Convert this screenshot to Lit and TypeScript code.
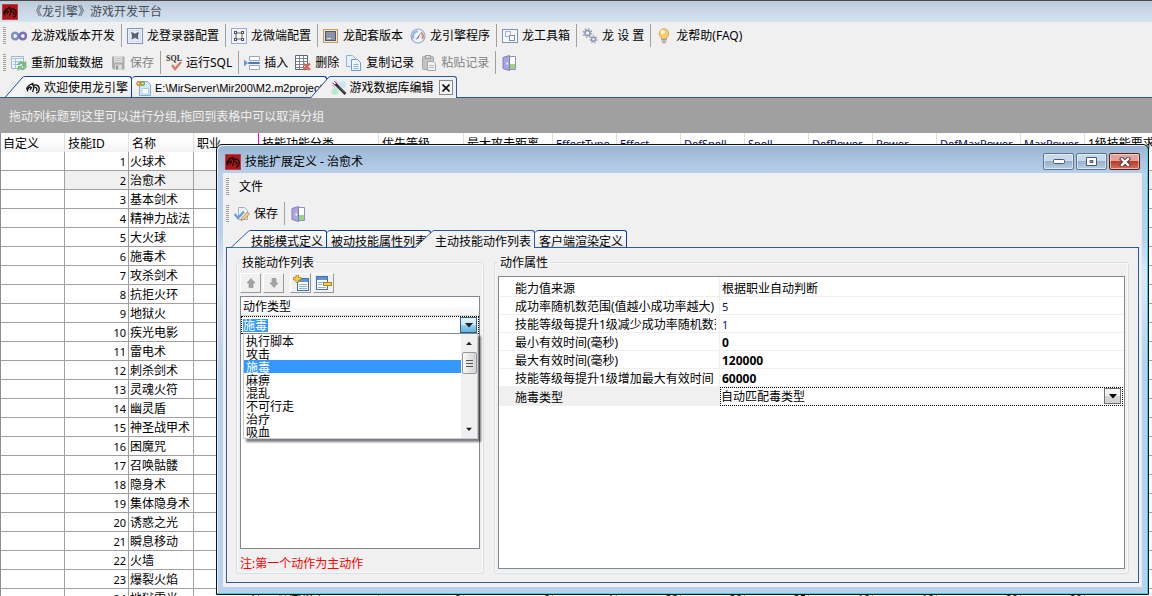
import { LitElement, html, svg, css, nothing, TemplateResult } from "lit";
import { customElement, property } from "lit/decorators.js";

const glyph = (body: TemplateResult) =>
  html`<svg width="16" height="16" viewBox="0 0 16 16" aria-hidden="true">${body}</svg>`;

const dragon = svg`
  <path d="M1.500 9.500C2 7 4 5 6.500 4M2.500 11.500C2 8.500 5 6 6.500 7.500L5 10M6.500 4L8.500 3M6.500 4C9 4.500 9.500 8 7.500 12M8.500 6C10.500 3.800 14.500 5.500 14.200 9C14 11.500 12.500 13 11 13M9.500 7.500C11.500 7 12.500 9 11.500 11" fill="none" stroke-width="1.300"/>`;

const icons: Record<string, TemplateResult> = {
  logo: glyph(svg`<rect width="16" height="16" rx="1.500" fill="#a8191c"/><rect x=".5" y=".5" width="15" height="15" rx="1" fill="none" stroke="#c8393a"/><g stroke="#200808">${dragon}</g>`),
  dragon: glyph(svg`<g stroke="#111">${dragon}</g>`),
  infinity: glyph(svg`<path d="M8 8C6.500 5.300 5.500 4.800 4.200 4.800A3.200 3.200 0 0 0 4.200 11.200C5.600 11.200 6.600 10.500 8 8Z" fill="none" stroke="#7d93c6" stroke-width="2.600"/><path d="M8 8C9.500 5.200 10.500 4.800 11.800 4.800A3.200 3.200 0 0 1 11.800 11.200C10.400 11.200 9.400 10.500 8 8Z" fill="none" stroke="#7a72b4" stroke-width="2.600"/>`),
  login: glyph(svg`<rect x=".5" y=".5" width="15" height="15" fill="#eef2fa" stroke="#7f93c0"/><rect x="2.500" y="2.500" width="11" height="11" fill="#e6ebf5" stroke="#b9c4dc" stroke-dasharray="1 1"/><path d="M4 4L7 5L8 6L9 5L12 4L11 8L11.500 11.500L9 10.500L8 9.500L7 10.500L4.500 11.500L5 8Z" fill="#56627a"/>`),
  micro: glyph(svg`<rect x=".5" y=".5" width="15" height="15" fill="#f2f4fa" stroke="#9aabd0"/><rect x="5" y="5" width="6" height="6" fill="none" stroke="#666"/><g fill="#fff" stroke="#555"><rect x="3.500" y="3.500" width="2" height="2"/><rect x="10.500" y="3.500" width="2" height="2"/><rect x="3.500" y="10.500" width="2" height="2"/><rect x="10.500" y="10.500" width="2" height="2"/></g>`),
  monitor: glyph(svg`<rect x=".5" y="1.500" width="14" height="13" fill="#f9e6c8" stroke="#c8995a"/><rect x="2.500" y="3.500" width="10" height="9" fill="#8a95ab" stroke="#4d5973"/><path d="M4 10.500H8" stroke="#dfe6f5"/>`),
  gauge: glyph(svg`<circle cx="8" cy="8" r="7" fill="#eef4fc" stroke="#9aa8c6" stroke-width="1.200"/><path d="M3.500 10.500A5 5 0 0 1 8 3.200" fill="none" stroke="#86b4e4" stroke-width="2"/><path d="M11 4.500A5 5 0 0 1 12.200 10.800" fill="none" stroke="#dd8470" stroke-width="2"/><path d="M5.500 12L11 4.500L8.500 10Z" fill="#5d6884"/>`),
  toolbox: glyph(svg`<rect x=".5" y="1.500" width="15" height="13" fill="#f7f9fd" stroke="#7b90c4"/><rect x="3.500" y="3.500" width="5" height="5" fill="none" stroke="#9fb2da"/><rect x="7.500" y="7.500" width="5" height="5" fill="#fff" stroke="#7f90b4"/>`),
  gears: glyph(svg`<circle cx="5.500" cy="5" r="2.600" fill="none" stroke="#8794b0" stroke-width="1.500"/><circle cx="5.500" cy="5" r="4.200" fill="none" stroke="#94a1bb" stroke-width="1.500" stroke-dasharray="1.600 1.700"/><circle cx="11.500" cy="11.300" r="2" fill="none" stroke="#8794b0" stroke-width="1.400"/><circle cx="11.500" cy="11.300" r="3.400" fill="none" stroke="#94a1bb" stroke-width="1.300" stroke-dasharray="1.500 1.500"/>`),
  bulb: glyph(svg`<path d="M8 .7A4.900 4.900 0 0 1 10.800 9.500V11H5.200V9.500A4.900 4.900 0 0 1 8 .7Z" fill="#fbcb72" stroke="#e0a552"/><ellipse cx="6.700" cy="4" rx="2.200" ry="2.300" fill="#fff1c8"/><path d="M5.500 11.700H10.500M5.500 13.200H10.500M6.500 14.800H9.500" stroke="#8d93a0"/>`),
  reload: glyph(svg`<path d="M.5 1.500H12.500V13.500H.5Z" fill="#eef5fb" stroke="#9fb8d4"/><path d="M.5 3.500H12.500M2 6.500H11M2 9.500H7M4.500 3.500V13" stroke="#a9c3de"/><path d="M6.500 9.500C8 6.500 11.500 6 13 8L14.800 6.500V10.500H10.800L12 9.200C10.500 8 9 8.500 8.500 10Z" fill="#7cc480" stroke="#4b9e59" stroke-width=".6"/><path d="M15.500 11.500C14 15 10.500 15.500 8.800 13.700L7 15.300V11.500H11L9.800 12.700C11.500 13.800 13 13 13.500 11.500Z" fill="#8fd090" stroke="#4b9e59" stroke-width=".6"/>`),
  saveGrey: glyph(svg`<path d="M2 1.500H14.500V14.500H3.500L2 13Z" fill="#ababab"/><rect x="4" y="1.500" width="8.500" height="6" fill="#dedede"/><path d="M5 3.500H11.500M5 5.500H11.500" stroke="#c2c2c2"/><rect x="5" y="9.500" width="7" height="5" fill="#dadada"/><rect x="6" y="10.500" width="2" height="4" fill="#989898"/>`),
  sql: html`<svg width="16" height="16" viewBox="0 0 16 16" aria-hidden="true" overflow="visible"><text x="0" y="6" font-family="Liberation Serif, serif" font-size="8" font-weight="700" fill="#333">SQL</text><path d="M6 10L9 14L15 7" fill="none" stroke="#e07a68" stroke-width="2.400"/></svg>`,
  insert: glyph(svg`<path d="M5.500 1.500H15.500V5.500H5.500Z" fill="#fff" stroke="#96a6bd"/><path d="M4.500 7.500H15.500V8.500H4.500Z" fill="#fff" stroke="#4d7ab4"/><path d="M5.500 10.500H15.500V14.500H5.500Z" fill="#fff" stroke="#96a6bd"/><path d="M0 4.500L4 8L0 11.500Z" fill="#6d98d2"/>`),
  remove: glyph(svg`<path d="M.5.5H12.500V14.500H.5Z" fill="#fff" stroke="#5c6678"/><path d="M.5 3.500H12.500M.5 6.500H12.500M.5 9.500H12.500M.5 12.500H12.500M4.500.5V14.500M8.500.5V14.500" stroke="#7b8596"/><path d="M8.500 8.500L15 15M15 8.500L8.500 15" stroke="#e0604c" stroke-width="2.200"/>`),
  copy: glyph(svg`<path d="M.5.5H6.500L9.500 3.500V11.500H.5Z" fill="#e8f2fc" stroke="#8eb0d9"/><path d="M5.500 4.500H11.500L14.500 7.500V15.500H5.500Z" fill="#eef6ff" stroke="#6f9acd"/><path d="M7.500 9.500H12.500M7.500 11.500H12.500M7.500 13.500H12.500" stroke="#8bb2de"/>`),
  paste: glyph(svg`<rect x="1.500" y="1.500" width="11" height="13" rx="1" fill="#c2c2c2" stroke="#a8a8a8"/><rect x="4.500" y=".5" width="5" height="3" fill="#d8d8d8" stroke="#a0a0a0"/><path d="M6.500 6.500H12.500L14.500 8.500V15.500H6.500Z" fill="#f0f0f0" stroke="#a6a6a6"/><path d="M8 10.500H13M8 12.500H13" stroke="#bbb"/>`),
  door: glyph(svg`<path d="M8.500 1.500H14.500V14.500H8.500Z" fill="#fff" stroke="#8d90c4"/><path d="M9 9H14V14H9Z" fill="#9ad680"/><path d="M2 2.500L8.500.5V15.500L2 13.500Z" fill="#aaa7de" stroke="#7f7cbe"/><rect x="5.500" y="7.500" width="1.500" height="2" fill="#fff"/>`),
  project: glyph(svg`<path d="M3.500 1.500H11.500L14.500 4.500V15.500H3.500Z" fill="#d7e9f8" stroke="#7eaeda"/><path d="M6 8.500H12.500V14H6Z" fill="#fff" stroke="#a9cbe8"/><circle cx="2.800" cy="3.500" r="1.800" fill="none" stroke="#e58a2d" stroke-width="1.500"/><circle cx="6.600" cy="3.500" r="1.800" fill="none" stroke="#8aae3b" stroke-width="1.500"/>`),
  wand: glyph(svg`<circle cx="4" cy="4" r="3.500" fill="#dcb7e8" opacity=".7"/><circle cx="4" cy="11.500" r="3.500" fill="#a5ecc4" opacity=".8"/><circle cx="11.500" cy="4.500" r="3.500" fill="#bfe6f4" opacity=".8"/><path d="M2.500 2L14.500 14" stroke="#333" stroke-width="2.600"/><path d="M2 1.500L4.500 4" stroke="#fff" stroke-width="1.600"/><path d="M8 6.500L14 12.500" stroke="#8b8b8b" stroke-width=".7"/>`),
  edit: glyph(svg`<path d="M4.500 1.500H10.500L13.500 4.500V13.500H4.500Z" fill="#edf3fb" stroke="#a0b0cc"/><path d="M.7 8L4 12L10 5.500" fill="none" stroke="#6f99d6" stroke-width="2.200"/><path d="M7 14.500L8 11.500L13.500 6L15.500 8L10 13.500Z" fill="#f4cf83" stroke="#a98146" stroke-width=".8"/>`),
  up: glyph(svg`<path d="M8 3.500L12 8H10V12.500H6V8H4Z" fill="#a5a5a5" stroke="#8c8c8c" stroke-width=".6"/>`),
  down: glyph(svg`<path d="M8 12.500L12 8H10V3.500H6V8H4Z" fill="#a5a5a5" stroke="#8c8c8c" stroke-width=".6"/>`),
  addRow: glyph(svg`<rect x="4.500" y="3.500" width="11" height="12" fill="#fff" stroke="#466fae"/><rect x="5" y="4" width="10" height="3" fill="#5f93d8"/><path d="M6 9.500H14M6 11.500H14M6 13.500H14" stroke="#8fb2df"/><path d="M3 0H5.500V2.500H8V5H5.500V7.500H3V5H.5V2.500H3Z" fill="#f8d34a" stroke="#a9821c" stroke-width=".8"/>`),
  delRow: glyph(svg`<rect x=".5" y="1.500" width="11" height="13" fill="#fff" stroke="#466fae"/><rect x="1" y="2" width="10" height="3" fill="#5f93d8"/><path d="M2 7.500H10M2 9.500H6M2 12.500H10" stroke="#8fb2df"/><rect x="7.500" y="7.500" width="8" height="3" fill="#f8d34a" stroke="#a9821c"/>`),
};

const fontStack = css`"Noto Sans", "Noto Sans CJK SC", sans-serif`;

const shared = css`
  * { box-sizing: border-box; }
  svg { display: block; flex: none; }
  button, select, input { font: inherit; color: inherit; margin: 0; padding: 0; border: 0; border-radius: 0; background: none; }
`;

type ToolItem = { icon: string; text?: string; off?: boolean; label?: string } | "sep";

@customElement("tool-strip")
class ToolStrip extends LitElement {
  @property({ attribute: false }) items: ToolItem[] = [];
  static styles = [shared, css`
    :host { display: flex; align-items: center; height: 27px; padding-left: 3px; background: #f0f0f0; }
    .grip { width: 3px; height: 17px; margin-right: 2px; background: repeating-linear-gradient(#a0a0a0 0 1px, transparent 1px 2px); }
    button { display: flex; align-items: center; gap: 4px; height: 23px; padding: 0 3px; line-height: 16px; white-space: nowrap; }
    button + button { margin-left: 1px; }
    button:disabled { color: #838383; }
    .plain { padding: 0 8px; }
    .sep { width: 1px; height: 23px; margin: 0 2px 0 3px; background: #a0a0a0; }
  `];
  render() {
    return html`<span class="grip"></span>${this.items.map((i) =>
      i === "sep"
        ? html`<span class="sep"></span>`
        : html`<button class=${i.icon ? "" : "plain"} ?disabled=${i.off} aria-label=${i.label ?? nothing}>${i.icon ? icons[i.icon] : nothing}${i.text ?? nothing}</button>`)}`;
  }
}

type Tab = { text: string; icon?: string; closable?: boolean };

@customElement("tab-strip")
class TabStrip extends LitElement {
  @property({ attribute: false }) tabs: Tab[] = [];
  @property({ type: Number }) active = 0;
  static styles = [shared, css`
    :host { display: flex; height: var(--tab-height, 22px); padding-left: 5px; background: linear-gradient(#2c5aa0, #2c5aa0) bottom / 100% 1px no-repeat; }
    .tab { position: relative; display: flex; height: 100%; cursor: default; }
    .slope { height: 100%; }
    .body {
      display: flex; align-items: center; gap: 3px; height: 100%; padding: var(--tab-drop, 0) 3px 0 0; white-space: nowrap; line-height: var(--tab-line, 16px);
      border: solid #0b3f9e; border-width: 1px 1px 0 0; border-radius: 0 3px 0 0; overflow: hidden;
      background: linear-gradient(#fff, #e8e8e8);
      box-shadow: inset 0 -1px #2c5aa0;
    }
    .square .body { padding-left: 4px; border-radius: 4px 3px 0 0; }
    .active { z-index: 1; margin-left: -16px; }
    .active .body { background: #f0f0f0; box-shadow: none; border-color: #2c5aa0; }
    .path { max-width: 195px; font-family: "Liberation Sans", sans-serif; font-size: 11px; }
    .close { display: grid; place-items: center; width: 14px; height: 15px; margin-left: 2px; border: 1px solid #8b8b8b; background: #f4f4f4; }
  `];
  render() {
    return this.tabs.map((t, i) => {
      const active = i === this.active;
      const sloped = active || i === 0;
      return html`<div class="tab ${active ? "active" : ""} ${sloped ? "" : "square"} ${t.icon === "project" ? "path" : ""}">
        ${sloped
          ? html`<svg class="slope" width="20" height="22" viewBox="0 0 20 22" preserveAspectRatio="none" aria-hidden="true">
              <path d="M0 22L17 2Q18 .5 20 .5V22Z" fill=${active ? "#f0f0f0" : "#f4f4f4"}/>
              <path d="M0 21.500L17 2Q18 .5 20 .5" fill="none" stroke="#1d4fa3"/>
              ${active ? nothing : svg`<path d="M0 21.500H20" stroke="#2c5aa0"/>`}
            </svg>`
          : nothing}
        <button class="body">${t.icon ? icons[t.icon] : nothing}<span>${t.text}</span>${t.closable
          ? html`<span class="close"><svg width="8" height="8" viewBox="0 0 8 8"><path d="M.5.5L7.500 7.500M7.500.5L.5 7.500" stroke="#111" stroke-width="1.600"/></svg></span>`
          : nothing}</button>
      </div>`;
    });
  }
}

const columns = [
  { name: "自定义", width: 64 }, { name: "技能ID", width: 64 }, { name: "名称", width: 65 }, { name: "职业", width: 65 },
  { name: "技能功能分类", width: 120 }, { name: "优先等级", width: 85 }, { name: "最大攻击距离", width: 89 },
  { name: "EffectType", width: 64 }, { name: "Effect", width: 64 }, { name: "DefSpell", width: 64 }, { name: "Spell", width: 64 },
  { name: "DefPower", width: 64 }, { name: "Power", width: 64 }, { name: "DefMaxPower", width: 84 }, { name: "MaxPower", width: 64 },
  { name: "1级技能要求", width: 90 },
];

const skills = ["火球术", "治愈术", "基本剑术", "精神力战法", "大火球", "施毒术", "攻杀剑术", "抗拒火环", "地狱火", "疾光电影", "雷电术",
  "刺杀剑术", "灵魂火符", "幽灵盾", "神圣战甲术", "困魔咒", "召唤骷髅", "隐身术", "集体隐身术", "诱惑之光", "瞬息移动", "火墙", "爆裂火焰", "地狱雷光"];

const lastRow = ["1", "三_范围攻击", "0", "0", "1", "22", "20", "25", "10", "10", "20", "20"];

@customElement("skill-table")
class SkillTable extends LitElement {
  static styles = [shared, css`
    :host { display: block; overflow: hidden; background: #fff; border-left: 1px solid #8a8f9c; }
    table { table-layout: fixed; width: 100%; min-width: 1174px; border-collapse: separate; border-spacing: 0; }
    th, td { height: 19px; padding: 2px 2px 0 1px; overflow: hidden; white-space: nowrap; text-align: left; font-weight: 400; line-height: 16px; }
    th { padding: 2px 3px 0; background: linear-gradient(#fff 40%, #f1f2f4); border-right: 1px solid #dedfe1; color: #000; }
    th:first-child { padding-left: 2px; }
    th.latin { color: #10105a; font-size: 11px; }
    td { border: solid #a0a0a0; border-width: 0 1px 1px 0; }
    .num { text-align: right; font-size: 11px; }
    .mark { border-right-color: #ff00e0; }
    .current td { background: #f0f0f0; }
    .current td:first-child { background: #fff; }
  `];
  render() {
    return html`<table>
      <colgroup>${columns.map((c) => html`<col style="width:${c.width}px">`)}</colgroup>
      <thead><tr>${columns.map((c, i) => html`<th class="${/^[A-Z]/.test(c.name) ? "latin" : ""} ${i === 3 ? "mark" : ""}">${c.name}</th>`)}</tr></thead>
      <tbody>${skills.map((s, r) => html`<tr class=${r === 1 ? "current" : ""}>
        <td></td><td class="num">${r + 1}</td><td>${s}</td>
        ${columns.slice(3).map((_, i) => html`<td class="${i === 1 ? "" : "num"} ${i === 0 ? "mark" : ""}">${r === skills.length - 1 ? lastRow[i] : nothing}</td>`)}
      </tr>`)}</tbody>
    </table>`;
  }
}

const actions = ["执行脚本", "攻击", "施毒", "麻痹", "混乱", "不可行走", "治疗", "吸血"];

@customElement("action-list")
class ActionList extends LitElement {
  static styles = [shared, css`
    :host { display: flex; flex-direction: column; flex: 1; min-height: 0; border: 1px solid #828790; background: #fff; }
    .head { height: 19px; padding: 0 2px; line-height: 20px; background: linear-gradient(#fff 45%, #f1f2f4); border-bottom: 1px solid #d5d5d5; }
    .editor { position: relative; display: flex; height: 18px; padding: 1px; border: 1px dotted #000; }
    .field { width: 100%; height: 100%; display: flex; align-items: center; }
    .value { flex: 1; min-width: 0; height: 13px; line-height: 13px; outline: 0;  color: #fff; background: linear-gradient(#3399ff, #3399ff) 0 0 / 25px 100% no-repeat; }
    .drop { display: grid; place-items: center; width: 17px; height: 16px; border: 1px solid #2c628b; background: linear-gradient(#e5f4fc, #c4e5f6 50%, #98d1ef 50%, #68b3db); }
    .popup { position: absolute; z-index: 1; top: 16px; left: 1px; right: 0; display: flex; height: 106px; border: 1px solid #c5cbd6; border-top-color: #828790; background: #fff; box-shadow: 3px 3px 2px #00000080; }
    .choices { flex: 1; height: 104px; overflow: hidden; outline: 0; appearance: none; scrollbar-width: none; }
    .choices option { display: flex; align-items: center; height: 13px; min-height: 13px; padding: 0 2px; line-height: 13px; color: #000; }
    .choices option:checked { color: #fff; background: #3399ff linear-gradient(#3399ff, #3399ff); }
    .scroll { display: flex; flex-direction: column; align-items: center; width: 16px; background: #f0f0f0; }
    .arrow { display: grid; place-items: center; height: 18px; }
    .thumb { display: grid; place-items: center; width: 15px; height: 22px; border: 1px solid #979797; border-radius: 2px; background: linear-gradient(90deg, #f8f8f8, #d3d3d5); }
    .space { flex: 1; }
  `];
  render() {
    const tri = (d: string, w = 8) => html`<svg width=${w} height="5" viewBox="0 0 8 5"><path d=${d} fill="#222"/></svg>`;
    return html`
      <div class="head">动作类型</div>
      <div class="editor">
        <div class="field">
          <input class="value" aria-label="动作类型" .value=${"施毒"}>
          <button class="drop" aria-label="打开">${tri("M0 0H8L4 4.500Z")}</button>
        </div>
        <div class="popup">
          <select class="choices" size="8" aria-label="动作类型">${actions.map((a) => html`<option ?selected=${a === "施毒"}>${a}</option>`)}</select>
          <div class="scroll">
            <span class="arrow">${tri("M0 4.500H8L4 0Z", 6)}</span>
            <span class="thumb"><svg width="7" height="9" viewBox="0 0 7 9"><path d="M0 1.500H7M0 4.500H7M0 7.500H7" stroke="#555"/></svg></span>
            <span class="space"></span>
            <span class="arrow">${tri("M0 0H8L4 4.500Z", 6)}</span>
          </div>
        </div>
      </div>`;
  }
}

const props = [
  { name: "能力值来源", value: "根据职业自动判断", kind: "text" },
  { name: "成功率随机数范围(值越小成功率越大)", value: "5", kind: "num" },
  { name: "技能等级每提升1级减少成功率随机数范围", value: "1", kind: "num" },
  { name: "最小有效时间(毫秒)", value: "0", kind: "set" },
  { name: "最大有效时间(毫秒)", value: "120000", kind: "set" },
  { name: "技能等级每提升1级增加最大有效时间", value: "60000", kind: "set" },
  { name: "施毒类型", value: "自动匹配毒类型", kind: "pick" },
];

@customElement("property-grid")
class PropertyGrid extends LitElement {
  static styles = [shared, css`
    :host { display: block; flex: 1; min-height: 0; padding-top: 1px; border: 1px solid #828790; background: #fff; }
    table { width: 100%; table-layout: fixed; border-collapse: separate; border-spacing: 0; }
    .names { width: 221px; }
    th, td { height: 18px; padding: 2px 0 0; border-bottom: 1px solid #f0f0f0; overflow: hidden; white-space: nowrap; text-align: left; font-weight: 400; line-height: 15px; }
    tr:first-child > * { height: 19px; }
    th { padding-left: 16px; border-right: 1px solid #f0f0f0; }
    td { padding-left: 2px; }
    .name { display: block; overflow: hidden; margin-right: 3px; }
    .num, .set { color: #10105a; font-size: 11px; }
    .set { color: #000; font-size: 12px; font-weight: 700; }
    .pick th { background: #f0f0f0; }
    .pick td { padding: 0 1px 0 0; border: 0; }
    .combo { display: flex; align-items: center; height: 19px; border: 1px dotted #000; position: relative; }
    .combo select { appearance: none; flex: 1; height: 17px; line-height: 16px; outline: 0; }
    .drop { position: absolute; right: 1px; top: 0; display: grid; place-items: center; width: 17px; height: 16px; border: 1px solid #707070; background: linear-gradient(#f2f2f2 50%, #d4d4d4 50%); pointer-events: none; }
  `];
  render() {
    return html`<table>
      <colgroup><col class="names"><col></colgroup>
      <tbody>${props.map((p) => html`<tr class=${p.kind === "pick" ? "pick" : ""}>
        <th scope="row"><span class="name">${p.name}</span></th>
        <td class=${p.kind}>${p.kind === "pick"
          ? html`<div class="combo"><select aria-label=${p.name}><option>${p.value}</option></select><span class="drop"><svg width="8" height="5" viewBox="0 0 8 5"><path d="M0 0H8L4 4.500Z" fill="#000"/></svg></span></div>`
          : p.value}</td>
      </tr>`)}</tbody>
    </table>`;
  }
}

@customElement("skill-dialog")
class SkillDialog extends LitElement {
  static styles = [shared, css`
    :host {
      display: flex; flex-direction: column; padding: 0 6px 7px; border: 1px solid #111; border-radius: 6px 6px 0 0;
      background: linear-gradient(#9ab5d3, #b9d1ea 29px, #b9d1ea 90px, #e0e9f4 130px, #b9d1ea 220px);
      box-shadow: inset -1px -1px #35d5ec, inset 1px 1px #e8f1fa;
    }
    .title { display: flex; align-items: center; gap: 4px; height: 28px; padding: 5px 2px 0; line-height: 16px; }
    .name { flex: 1; }
    .wbtn { display: grid; place-items: center; width: 31px; height: 17px; margin-left: -2px; border: 1px solid #5d7590; border-radius: 2px; background: linear-gradient(#c8d9ea 45%, #98b2cd 50%, #b6cfe6); box-shadow: inset 0 0 0 1px #ffffff80; }
    .shut { border-color: #5c1a1a; background: linear-gradient(#e3a29a 45%, #b93a24 50%, #d4735d); }
    .client { display: flex; flex-direction: column; flex: 1; min-height: 0; padding: 0 2px 4px 3px; background: #f0f0f0; border: solid #e2ecf6; border-width: 0 1px 0 0; }
    .bars { margin-left: -3px; }
    tab-strip { --tab-height: 18px; --tab-drop: 4px; --tab-line: 14px; margin-top: 3px; }
    .page { display: flex; gap: 10px; flex: 1; min-height: 0; padding: 5px 9px 8px; border: solid #2c5aa0; border-width: 0 1px 1px; }
    fieldset { position: relative; display: flex; flex-direction: column; min-width: 0; margin: 0; padding: 0 3px 4px; border: 1px solid #d5dfe5; border-radius: 3px; box-shadow: inset 0 0 0 1px #fff8; }
    legend { padding: 1px 2px 0; line-height: 17px; }
    .actions { flex: none; width: 248px; padding-bottom: 0; }
    .props { flex: 1; }
    .tools { display: flex; gap: 2px; margin: 2px 0 3px; }
    .tools button { display: grid; place-items: center; width: 21px; height: 20px; border: 1px solid #fff; border-right-color: #999; border-bottom-color: #999; }
    .tools .gap { margin-left: 4px; }
    .note { height: 24px; margin: 0; padding-top: 6px; line-height: 18px; color: #f00; }
    property-grid { margin-top: 5px; }
  `];
  render() {
    const tools: ToolItem[] = [{ icon: "edit", text: "保存" }, "sep", { icon: "door", label: "退出" }];
    return html`
      <div class="title">${icons.logo}<span class="name">技能扩展定义 - 治愈术</span>
        <button class="wbtn" aria-label="最小化"><svg width="12" height="5"><rect x=".5" y=".5" width="11" height="4" rx="1" fill="#fff" stroke="#4a5a70"/></svg></button>
        <button class="wbtn" aria-label="最大化"><svg width="11" height="9"><path d="M.5.5H10.500V8.500H.5ZM4 3.500H7V5.500H4Z" fill="#fff" stroke="#4a5a70" fill-rule="evenodd"/></svg></button>
        <button class="wbtn shut" aria-label="关闭"><svg width="12" height="10" viewBox="0 0 12 10"><path d="M3 2L9 8M9 2L3 8" stroke="#4b3440" stroke-width="4.200" stroke-linecap="square"/><path d="M3 2L9 8M9 2L3 8" stroke="#fff" stroke-width="2.400" stroke-linecap="square"/></svg></button>
      </div>
      <div class="client">
        <div class="bars">
          <tool-strip .items=${[{ icon: "", text: "文件" }] as ToolItem[]}></tool-strip>
          <tool-strip .items=${tools}></tool-strip>
        </div>
        <tab-strip .active=${2} .tabs=${[{ text: "技能模式定义" }, { text: "被动技能属性列表" }, { text: "主动技能动作列表" }, { text: "客户端渲染定义" }]}></tab-strip>
        <div class="page">
          <fieldset class="actions"><legend>技能动作列表</legend>
            <div class="tools">
              <button aria-label="上移">${icons.up}</button><button aria-label="下移">${icons.down}</button>
              <button class="gap" aria-label="添加">${icons.addRow}</button><button aria-label="删除">${icons.delRow}</button>
            </div>
            <action-list></action-list>
            <p class="note">注:第一个动作为主动作</p>
          </fieldset>
          <fieldset class="props"><legend>动作属性</legend><property-grid></property-grid></fieldset>
        </div>
      </div>`;
  }
}

const mainTools: ToolItem[] = [
  { icon: "infinity", text: "龙游戏版本开发" }, "sep", { icon: "login", text: "龙登录器配置" }, "sep",
  { icon: "micro", text: "龙微端配置" }, "sep", { icon: "monitor", text: "龙配套版本" }, { icon: "gauge", text: "龙引擎程序" }, "sep",
  { icon: "toolbox", text: "龙工具箱" }, "sep", { icon: "gears", text: "龙 设 置" }, "sep", { icon: "bulb", text: "龙帮助(FAQ)" },
];
const dataTools: ToolItem[] = [
  { icon: "reload", text: "重新加载数据" }, { icon: "saveGrey", text: "保存", off: true }, "sep", { icon: "sql", text: "运行SQL" }, "sep",
  { icon: "insert", text: "插入" }, { icon: "remove", text: "删除" }, { icon: "copy", text: "复制记录" },
  { icon: "paste", text: "粘贴记录", off: true }, "sep", { icon: "door", label: "退出" },
];

@customElement("app-root")
class AppRoot extends LitElement {
  static styles = [shared, css`
    :host { position: relative; display: flex; flex-direction: column; height: 100vh; overflow: hidden; background: #f0f0f0; color: #000; font: 12px/16px ${fontStack}; }
    .title { display: flex; align-items: center; gap: 12px; height: 22px; flex: none; padding: 0 2px; border-top: 1px solid #4a4a4a; background: linear-gradient(#bccadb, #d6e4f1); color: #454d57; }
    tool-strip, tab-strip { flex: none; }
    .group { flex: none; height: 35px; padding: 0 9px; line-height: 37px; background: #a0a0a0; color: #f0f0f0; }
    skill-table { flex: 1; min-height: 0; }
    .dialog { position: absolute; top: 144px; left: 216px; right: 3px; bottom: 1px; }
  `];
  render() {
    return html`
      <div class="title">${icons.logo}<span>《龙引擎》游戏开发平台</span></div>
      <tool-strip .items=${mainTools}></tool-strip>
      <tool-strip .items=${dataTools}></tool-strip>
      <tab-strip .active=${2} .tabs=${[{ text: "欢迎使用龙引擎", icon: "dragon" }, { text: "E:\\MirServer\\Mir200\\M2.m2project", icon: "project" }, { text: "游戏数据库编辑", icon: "wand", closable: true }]}></tab-strip>
      <div class="group">拖动列标题到这里可以进行分组,拖回到表格中可以取消分组</div>
      <skill-table></skill-table>
      <skill-dialog class="dialog"></skill-dialog>`;
  }
}
